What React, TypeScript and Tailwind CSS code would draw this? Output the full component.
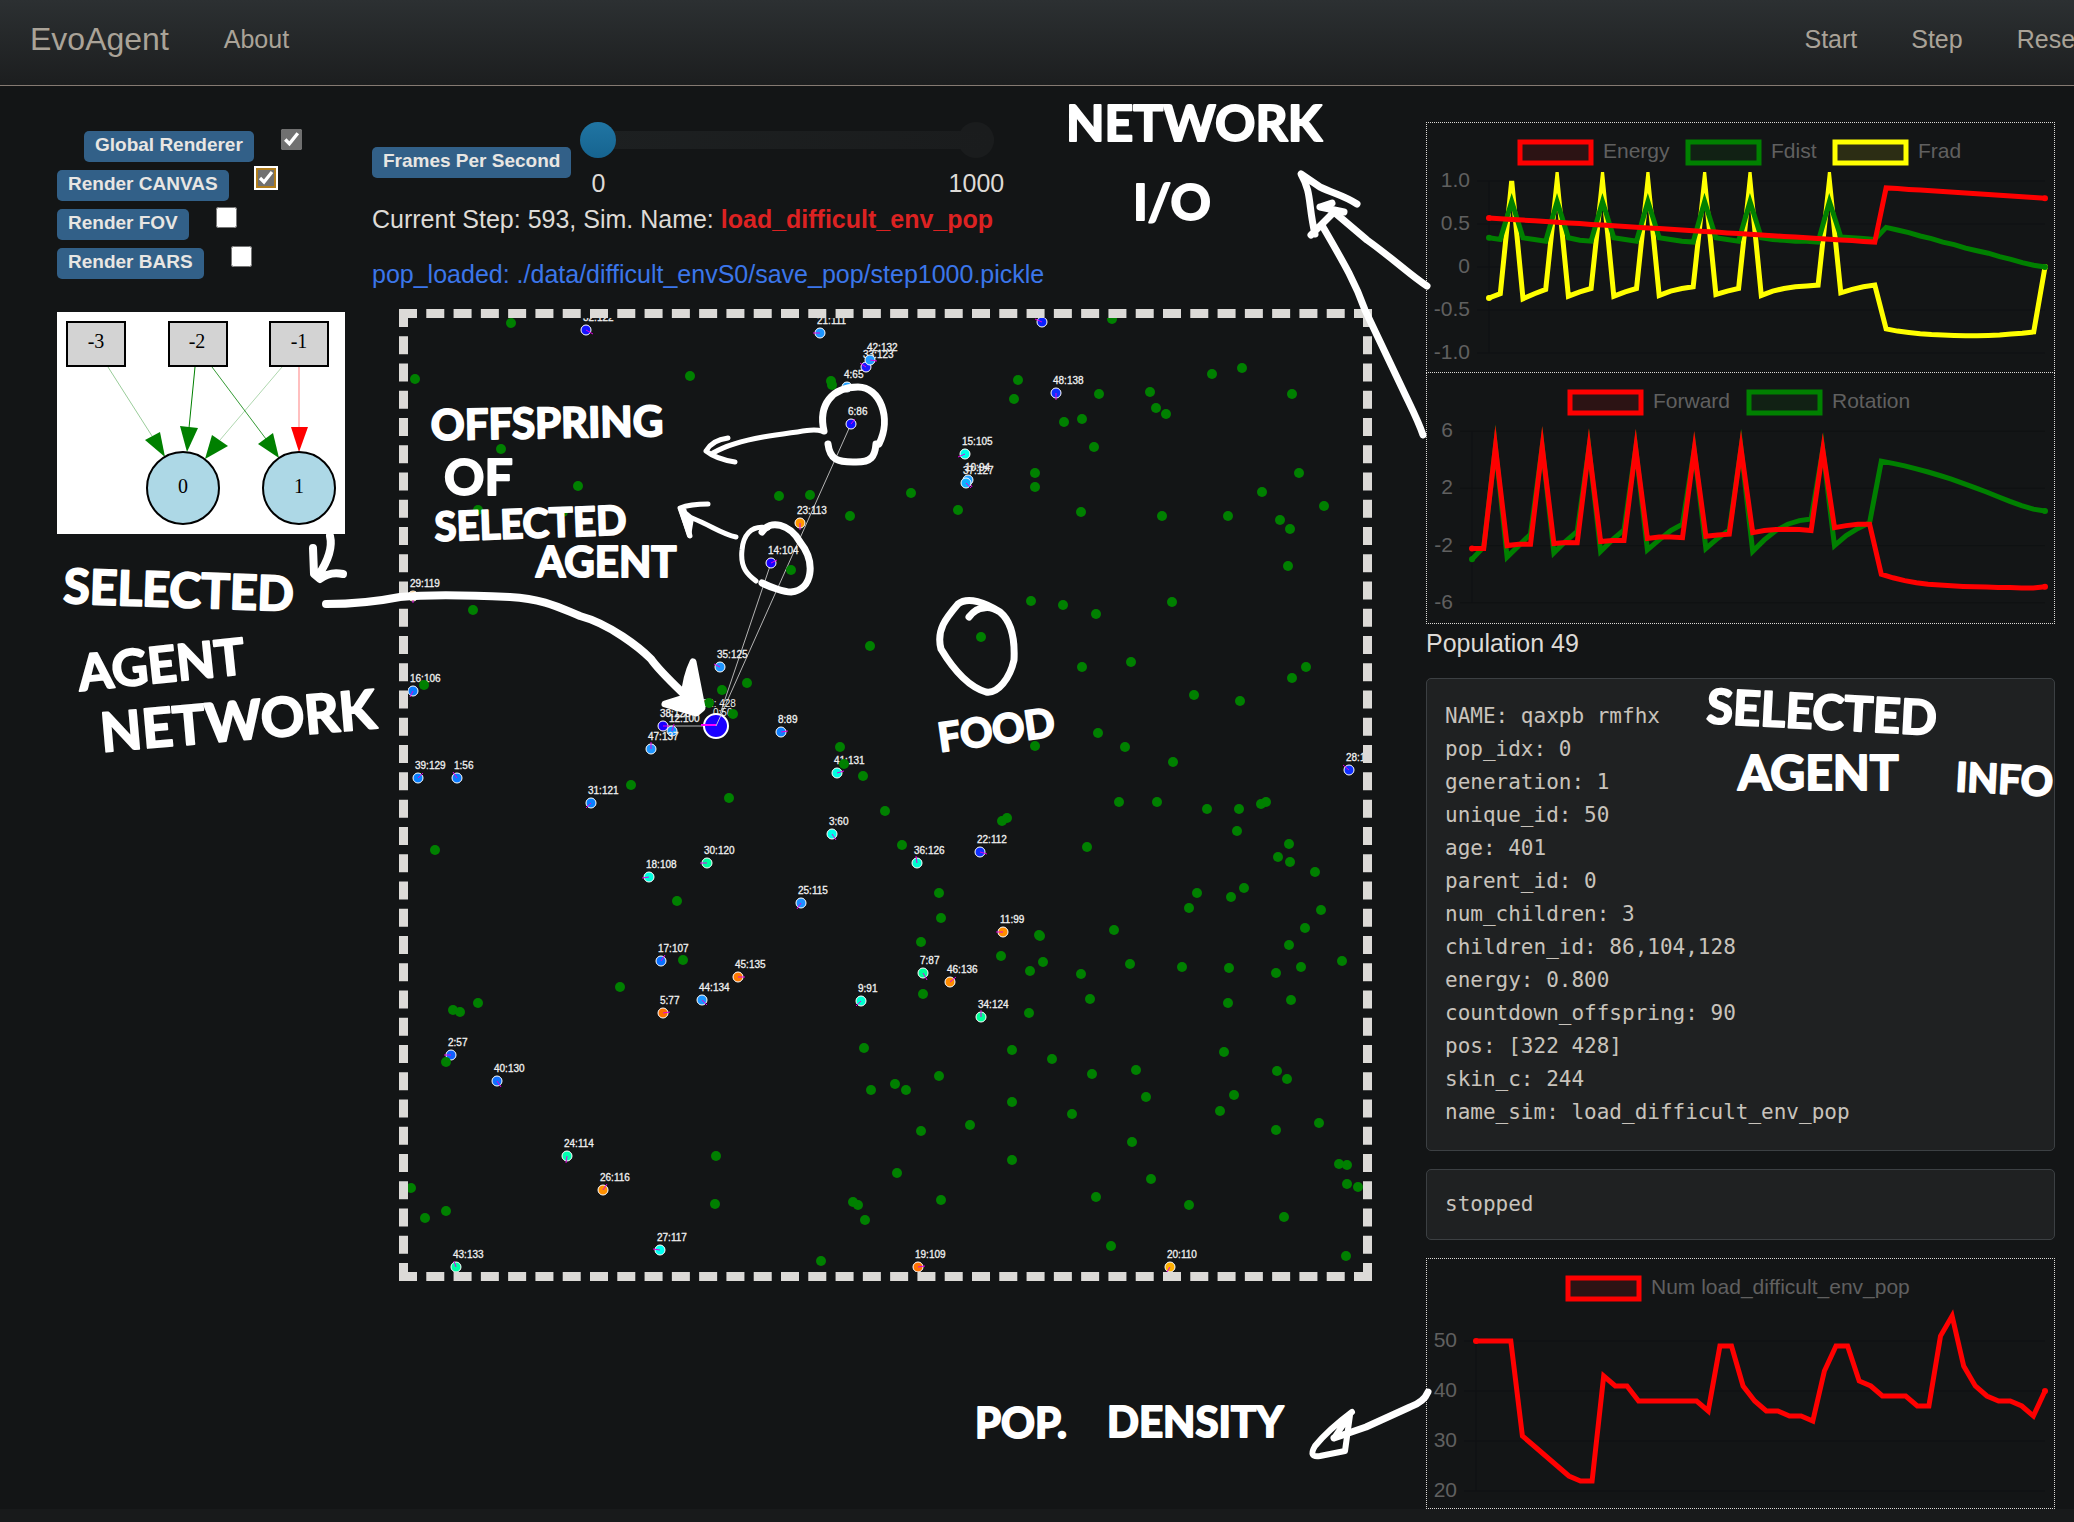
import React from "react";

type Point = [number, number];

const FOOD: Point[] = [
  [511, 323], [415, 379], [690, 376], [831, 381], [832, 385], [501, 449], [578, 486], [478, 510], [563, 512],
  [779, 496], [810, 495], [850, 516], [791, 570], [473, 610], [870, 646], [747, 683], [722, 690], [709, 703],
  [733, 714], [424, 685], [840, 747], [844, 764], [863, 776], [631, 785],
  [1112, 319], [1018, 380], [1014, 399], [1099, 394], [1064, 422], [1082, 419], [1150, 392], [1156, 408],
  [1166, 414], [1212, 374], [1242, 368], [1292, 394], [1094, 447], [1035, 473], [1035, 487], [911, 493],
  [958, 510], [1081, 512], [1162, 516], [1228, 516], [1262, 492], [1299, 473], [1324, 506], [1280, 520],
  [1290, 529], [1288, 566], [1031, 601], [1063, 605], [1096, 614], [1172, 602], [981, 637], [1082, 667],
  [1131, 662], [1306, 667], [1292, 678], [1194, 695], [1240, 701], [1098, 733], [1125, 747], [1035, 746],
  [1173, 762],
  [729, 798], [885, 811], [435, 850], [677, 901], [683, 960], [620, 987], [478, 1003], [453, 1010], [460, 1012],
  [446, 1062], [864, 1048], [871, 1090], [895, 1084], [716, 1156], [411, 1188], [425, 1218], [446, 1211],
  [715, 1204], [853, 1202], [858, 1205], [865, 1220], [821, 1261],
  [902, 845], [1002, 821], [1007, 818], [1119, 802], [1157, 802], [1207, 809], [1239, 809], [1261, 804],
  [1266, 802], [1237, 831], [1289, 844], [1278, 857], [1290, 862], [1315, 872], [1087, 847], [939, 893],
  [941, 918], [921, 942], [923, 994], [1197, 893], [1189, 908], [1231, 897], [1244, 888], [1321, 910],
  [1305, 928], [1289, 945], [1114, 930], [1039, 935], [1040, 936], [1001, 956], [1030, 971], [1043, 962],
  [1081, 974], [1130, 964], [1182, 967], [1229, 968], [1276, 973], [1301, 967], [1342, 961], [1090, 999],
  [1029, 1013], [1228, 1003], [1291, 1000], [1012, 1050], [1052, 1059], [939, 1076], [1092, 1074], [1136, 1070],
  [1224, 1052], [1277, 1071], [1287, 1079], [906, 1090], [1012, 1102], [1146, 1097], [1234, 1095], [1220, 1111],
  [1072, 1114], [970, 1125], [921, 1131], [1276, 1130], [1319, 1123], [1132, 1142], [1012, 1160], [897, 1173],
  [1151, 1179], [1096, 1197], [941, 1200], [1189, 1205], [1284, 1217], [1339, 1164], [1347, 1165], [1347, 1184],
  [1358, 1187], [1111, 1246], [1346, 1256],
];

type Agent = [label: string, x: number, y: number, color: string, dx: number, dy: number];

const AGENTS: Agent[] = [
  ["32:122", 586, 330, "#1414ff", 7, 4],
  ["21:111", 820, 333, "#1e96ff", -7, 0],
  ["33:123", 866, 367, "#1a1aff", -6, -4],
  ["42:132", 870, 360, "#1e9bff", 7, 1],
  ["4:65", 847, 387, "#20a0ff", 0, 0],
  ["6:86", 851, 424, "#1010ff", 4, -5],
  ["23:113", 800, 523, "#ff9500", 0, 7],
  ["14:104", 771, 563, "#1a00ff", 6, -3],
  ["29:119", 413, 596, "#ff9500", 0, 7],
  ["35:125", 720, 667, "#1e96ff", -6, -3],
  ["16:106", 413, 691, "#0a7aff", -3, 6],
  ["38:128", 663, 726, "#1a00ff", 7, 0],
  ["12:100", 672, 731, "#1090ff", 2, -7],
  ["47:137", 651, 749, "#1e96ff", 0, -7],
  ["8:89", 781, 732, "#1080ff", 7, -1],
  ["39:129", 418, 778, "#0a80ff", 5, -5],
  ["1:56", 457, 778, "#0a7aff", -4, -6],
  ["41:131", 837, 773, "#00ffe0", 7, -2],
  ["", 1042, 322, "#0a20ff", -7, -3],
  ["48:138", 1056, 393, "#1030ff", 0, 7],
  ["15:105", 965, 454, "#00ffe8", -7, 3],
  ["10:94", 968, 480, "#20a0ff", 4, 7],
  ["37:127", 966, 483, "#10b0ff", 5, 5],
  ["28:118", 1349, 770, "#1030ff", -6, -5],
  ["31:121", 591, 803, "#0a80ff", -5, 5],
  ["18:108", 649, 877, "#00ffe0", -7, 1],
  ["30:120", 707, 863, "#00ffa0", -7, 0],
  ["3:60", 832, 834, "#00ffe8", 4, 6],
  ["25:115", 801, 903, "#1e90ff", -4, 6],
  ["17:107", 661, 961, "#0a70ff", 4, -6],
  ["45:135", 738, 977, "#ff7800", 7, 0],
  ["44:134", 702, 1000, "#1e96ff", 5, 5],
  ["5:77", 663, 1013, "#ff7000", 7, -1],
  ["9:91", 861, 1001, "#00ffd0", -5, 5],
  ["2:57", 451, 1055, "#1060ff", -7, 0],
  ["40:130", 497, 1081, "#1070ff", 4, 6],
  ["24:114", 567, 1156, "#00ffb0", -1, 7],
  ["26:116", 603, 1190, "#ff9000", 4, -6],
  ["27:117", 660, 1250, "#00fff0", -7, -1],
  ["43:133", 456, 1267, "#00ffa8", -2, -6],
  ["36:126", 917, 863, "#00ffd0", -1, -7],
  ["22:112", 980, 852, "#1030ff", 7, 2],
  ["11:99", 1003, 932, "#ff8c00", -7, 0],
  ["7:87", 923, 973, "#00ff98", 4, 7],
  ["46:136", 950, 982, "#ff8c00", 6, -5],
  ["34:124", 981, 1017, "#00ff98", 0, -7],
  ["19:109", 918, 1267, "#ff7000", 7, -1],
  ["20:110", 1170, 1267, "#ffb000", -3, 5],
];

function World() {
  return (
    <div className="mt-5 mr-[54px] ml-[27px] border-[9px] border-dashed border-[#dcdad7]">
      <svg viewBox="408 318 955 954" className="block h-auto w-full" fontFamily="Liberation Sans, Arial, sans-serif">
        <g stroke="#b4b4b4" strokeWidth="1">
          <line x1="716" y1="726" x2="851" y2="424" />
          <line x1="716" y1="726" x2="771" y2="563" />
          <line x1="716" y1="726" x2="663" y2="726" />
        </g>
        {AGENTS.map(([label, x, y, color, dx, dy], i) => (
          <g key={i}>
            <circle cx={x} cy={y} r="5" fill={color} stroke="#fff" strokeWidth="1" />
            <line x1={x} y1={y} x2={x + dx} y2={y + dy} stroke="#e000e0" strokeWidth="1" />
            {label && (
              <text x={x - 3} y={y - 9} fontSize="10" fill="#f0f0f0" stroke="#f0f0f0" strokeWidth="0.3">
                {label}
              </text>
            )}
          </g>
        ))}
        <g fontSize="10" fill="#f0f0f0">
          <text x="697" y="707">322: 428</text>
          <text x="713" y="716">0:50</text>
        </g>
        <circle cx="716" cy="726" r="12" fill="#1a00ff" stroke="#fff" strokeWidth="2" />
        <line x1="701" y1="725" x2="716" y2="725" stroke="#ff00ff" strokeWidth="2" />
        <path d="M716 726l6-13" stroke="#c4c4d8" />
        {FOOD.map(([x, y], i) => (
          <circle key={i} cx={x} cy={y} r="5" fill="#008000" />
        ))}
      </svg>
    </div>
  );
}

type Series = { name: string; color: string; fill: string; box: number; data: number[] };
type Tick = [text: string, value: number];

function Chart({
  id,
  series,
  ticks,
  x0,
  zero,
  unit,
  height,
}: {
  id: string;
  series: Series[];
  ticks: Tick[];
  x0: number;
  zero: number;
  unit: number;
  height: number;
}) {
  const step = (619 - x0) / 49;
  const y = (v: number) => zero - v * unit;
  return (
    <svg viewBox={`1 1 627 ${height}`} className="block h-auto w-full" fontFamily="Liberation Sans, Arial, sans-serif" fontSize="21">
      <clipPath id={id}>
        <rect x="0" y="50" width="629" height="200" />
      </clipPath>
      <g stroke="#0f1112" strokeWidth="1">
        <line x1={x0} x2={x0} y1={y(ticks[0][1])} y2={y(ticks[ticks.length - 1][1])} />
        {ticks.map(([t, v]) => (
          <line key={t} x1={x0 - 12} x2="619" y1={y(v)} y2={y(v)} />
        ))}
      </g>
      {ticks.map(([t, v]) => (
        <text key={t} x={x0 - 19} y={y(v) + 6} textAnchor="end" fill="#606060">
          {t}
        </text>
      ))}
      <g clipPath={`url(#${id})`}>
        {[...series].reverse().map((s) => (
          <g key={s.name}>
            <polyline
              points={s.data.map((v, i) => `${(x0 + i * step).toFixed(1)},${y(v).toFixed(1)}`).join(" ")}
              fill="none"
              stroke={s.color}
              strokeWidth="5"
              strokeMiterlimit="10"
            />
            <circle cx={x0} cy={y(s.data[0])} r="3" fill={s.color} />
            <circle cx="619" cy={y(s.data[49])} r="3" fill={s.color} />
          </g>
        ))}
      </g>
      {series.map((s) => (
        <g key={s.name}>
          <rect x={s.box + 3} y="20" width="71" height="21" fill={s.fill} stroke={s.color} strokeWidth="5" />
          <text x={s.box + 86} y="36" fill="#606060">
            {s.name}
          </text>
        </g>
      ))}
    </svg>
  );
}

const energy = [
  ...Array.from({ length: 35 }, (_, i) => 0.57 - (0.28 * i) / 34),
  ...Array.from({ length: 15 }, (_, i) => 0.92 - (0.12 * i) / 14),
];

const fdist = [
  0.34, 0.32, 0.76, 0.34, 0.32, 0.3, 0.76, 0.34, 0.31, 0.3, 0.76, 0.34, 0.32, 0.3, 0.76, 0.34, 0.32, 0.3, 0.29, 0.76,
  0.34, 0.32, 0.3, 0.76, 0.34, 0.32, 0.31, 0.3, 0.3, 0.29, 0.76, 0.35, 0.34, 0.33, 0.32, 0.46, 0.43, 0.4, 0.36, 0.33,
  0.29, 0.26, 0.22, 0.19, 0.16, 0.12, 0.09, 0.05, 0.02, 0,
];

const frad = [
  -0.36, -0.31, 1, -0.37, -0.31, -0.26, 1, -0.34, -0.29, -0.25, 1, -0.34, -0.29, -0.25, 1, -0.33, -0.28, -0.25, -0.23, 1,
  -0.32, -0.28, -0.25, 1, -0.33, -0.28, -0.25, -0.23, -0.22, -0.21, 1, -0.3, -0.26, -0.23, -0.21, -0.72, -0.745, -0.76,
  -0.775, -0.785, -0.79, -0.795, -0.8, -0.8, -0.795, -0.79, -0.78, -0.77, -0.755, 0,
];

const forward = [
  -2.2, -2.2, 4.9, -2, -1.9, -1.9, 4.9, -1.85, -1.78, -1.8, 4.8, -1.72, -1.65, -1.65, 4.8, -1.5, -1.4, -1.4, -1.45, 4.7,
  -1.35, -1.25, -1.2, 4.8, -1.1, -0.95, -0.88, -0.86, -0.88, -0.95, 4.7, -0.75, -0.6, -0.5, -0.5, -4, -4.25, -4.45, -4.6,
  -4.7, -4.76, -4.81, -4.85, -4.88, -4.9, -4.92, -4.94, -4.96, -4.97, -4.88,
];

const rotation = [
  -2.95, -2.1, 4.9, -2.8, -2, -1.2, 4.9, -2.5, -1.7, -1, 4.8, -2.4, -1.6, -0.9, 4.8, -2.3, -1.6, -0.95, -0.5, 4.7, -2.2,
  -1.5, -0.9, 4.8, -2.4, -1.6, -0.95, -0.5, -0.25, -0.15, 4.7, -2, -1.3, -0.8, -0.4, 3.9, 3.75, 3.57, 3.37, 3.15, 2.9,
  2.65, 2.35, 2.05, 1.75, 1.42, 1.1, 0.8, 0.55, 0.42,
];

const population = [
  50, 50, 50, 50, 31, 29, 27, 25, 23, 22, 22, 43, 41, 41, 38, 38, 38, 38, 38, 38, 36, 49, 49, 41, 38, 36, 36, 35, 35, 34,
  44, 49, 49, 42, 41, 39, 39, 39, 37, 37, 51, 55, 45, 41, 39, 38, 38, 37, 35, 40,
];

const RED = "#ff0000";
const GREEN = "#008000";
const YELLOW = "#ffff00";
const RED_FILL = "#2c1314";
const GREEN_FILL = "#112114";
const YELLOW_FILL = "#2c2d14";

function NetworkGraph() {
  return (
    <svg
      viewBox="0 0 288 222"
      className="mt-[33px] block h-auto w-[288px] bg-white"
      fontFamily="Liberation Serif, Times New Roman, serif"
      fontSize="20"
      textAnchor="middle"
    >
      <g fill="#d3d3d3" stroke="#000" strokeWidth="2">
        <rect x="10" y="10" width="58" height="44" />
        <rect x="112" y="10" width="58" height="44" />
        <rect x="213" y="10" width="58" height="44" />
      </g>
      <g stroke="#008000">
        <line x1="51" y1="55" x2="95" y2="124" strokeOpacity="0.5" strokeWidth="0.8" />
        <line x1="138" y1="55" x2="132" y2="116" />
        <line x1="155" y1="55" x2="209" y2="127" strokeWidth="0.8" />
        <line x1="225" y1="55" x2="163" y2="128" strokeOpacity="0.4" strokeWidth="0.8" />
      </g>
      <line x1="242" y1="55" x2="242" y2="116" stroke="#ff0000" strokeOpacity="0.5" />
      <g fill="#008000">
        <path d="M88 128L103 120L108 145Z" />
        <path d="M123 114L141 116L130 140Z" />
        <path d="M201 132L216 121L222 146Z" />
        <path d="M155 123L171 134L148 147Z" />
      </g>
      <path d="M234 115H251L242 140Z" fill="#ff0000" />
      <g fill="#add8e6" stroke="#000" strokeWidth="2">
        <circle cx="126" cy="176" r="36" />
        <circle cx="242" cy="176" r="36" />
      </g>
      <text x="39" y="36">-3</text>
      <text x="140" y="36">-2</text>
      <text x="242" y="36">-1</text>
      <text x="126" y="181">0</text>
      <text x="242" y="181">1</text>
    </svg>
  );
}

const BADGE = "block h-[31px] rounded-[5px] bg-[#326088] px-[11px] text-[19px] leading-[28px] font-bold text-[#e8e6e3]";

function Toggle({ id, label, checked, focused, indent }: { id: string; label: string; checked?: boolean; focused?: boolean; indent?: boolean }) {
  return (
    <div className={indent ? "flex items-start gap-[27px] pl-[27px]" : "flex items-start gap-[27px]"}>
      <label htmlFor={id} className={`mt-0.5 ${BADGE}`}>
        {label}
      </label>
      <input
        id={id}
        type="checkbox"
        defaultChecked={checked}
        className={
          focused
            ? "size-5 rounded-[4px] accent-[#707070] ring-2 ring-white outline-2 -outline-offset-2 outline-[#b07d1c]"
            : "size-[21px] accent-[#707070]"
        }
      />
    </div>
  );
}

const INFO = [
  "NAME: qaxpb rmfhx",
  "pop_idx: 0",
  "generation: 1",
  "unique_id: 50",
  "age: 401",
  "parent_id: 0",
  "num_children: 3",
  "children_id: 86,104,128",
  "energy: 0.800",
  "countdown_offspring: 90",
  "pos: [322 428]",
  "skin_c: 244",
  "name_sim: load_difficult_env_pop",
].join("\n");

type Note = [text: string, x: number, y: number, size: number, angle: number];

const NOTES: Note[] = [
  ["SELECTED", 63, 603, 48, 2],
  ["AGENT", 80, 691, 50, -6],
  ["NETWORK", 102, 752, 54, -5],
  ["OFFSPRING", 431, 440, 42, -1],
  ["OF", 444, 495, 50, 0],
  ["SELECTED", 435, 541, 40, -2],
  ["AGENT", 536, 577, 42, 0],
  ["NETWORK", 1066, 141, 50, 0],
  ["I/O", 1133, 220, 50, 0],
  ["FOOD", 940, 752, 40, -8],
  ["SELECTED", 1706, 723, 48, 3],
  ["AGENT", 1738, 790, 48, 0],
  ["INFO", 1955, 791, 40, 3],
  ["POP.", 975, 1438, 42, 0],
  ["DENSITY", 1107, 1437, 42, 0],
];

function Annotations() {
  return (
    <svg
      viewBox="0 0 2074 1522"
      className="pointer-events-none absolute top-0 left-0 h-auto w-full"
      fontFamily="Lato, sans-serif"
      fontWeight="700"
    >
      {NOTES.map(([text, x, y, size, angle]) => (
        <text
          key={`${text}${x}`}
          x={x}
          y={y}
          fontSize={size}
          fill="#fff"
          stroke="#fff"
          strokeWidth="2"
          strokeLinejoin="round"
          transform={`rotate(${angle} ${x} ${y})`}
        >
          {text}
        </text>
      ))}
      <g fill="none" stroke="#fff" strokeWidth="7" strokeLinecap="round" strokeLinejoin="round">
        <path d="M330 536Q334 552 318 576M313 548L314 574L320 579Q330 571 343 574" strokeWidth="8" />
        <path d="M326 604C350 604 375 602 400 597C430 594 470 595 510 597C545 599 560 608 580 616C610 624 640 648 651 659C660 672 680 690 690 700" strokeWidth="8" />
        <path d="M665 704L684 698Q686 676 693 662L702 708L696 713Z" fill="#fff" />
        <path d="M824 431C818 405 832 387 858 387C880 387 892 418 879 444" />
        <path d="M828 444C830 460 838 462 853 462C872 463 875 456 876 444" />
        <path d="M822 431C812 428 800 432 763 437C740 441 725 446 713 453M728 438Q712 440 706 451Q716 459 735 462" strokeWidth="5" />
        <path d="M736 537C722 534 712 526 692 518M708 504Q690 504 680 508L690 536L684 510" strokeWidth="5" />
        <path d="M680 508L689 536L692 518Z" fill="#fff" strokeWidth="4" />
        <path d="M762 532C770 519 790 524 800 542C816 562 813 590 791 592C784 592 770 587 762 583" />
        <path d="M768 528C750 524 743 537 742 550C740 568 748 575 756 581" strokeWidth="5" />
        <path d="M969 617Q976 608 984 608M1000 612C1012 622 1015 640 1014 660C1010 678 998 694 986 692C966 686 950 664 941 649C936 630 946 618 958 604C968 596 986 603 1000 612Q990 606 984 608" strokeWidth="7" />
        <path d="M1427 286C1410 275 1395 260 1367 240L1334 212" />
        <path d="M1357 204C1345 196 1335 194 1320 187L1301 174C1312 193 1308 205 1315 234M1320 207L1344 212L1335 211L1311 235M1320 207L1332 203" />
        <path d="M1423 435C1418 420 1410 405 1403 390L1365 310C1355 282 1345 265 1323 227" />
        <path d="M1428 1392Q1424 1402 1410 1407L1366 1427L1334 1438" />
        <path d="M1352 1412Q1328 1430 1315 1446Q1308 1458 1320 1456L1345 1451L1350 1415L1334 1438" strokeWidth="6" />
      </g>
    </svg>
  );
}

const PRE = "rounded-[5px] border border-[#3c4043] bg-[#1f2122] px-[18px] font-['DejaVu_Sans_Mono',monospace] text-[21px] leading-[33px] text-[#c8c3bc]";

export default function App() {
  return (
    <div className="relative min-h-screen overflow-x-hidden bg-[#181a1b] font-['Liberation_Sans',Arial,sans-serif] text-[25px] leading-[30px] text-[#dedbd7]">
      <nav className="flex h-[86px] items-center gap-[55px] overflow-hidden border-b border-[#857a72] bg-linear-to-b from-[#2c3032] to-[#1c1e1f] pb-2 pl-[30px] text-[#aaa398]">
        <a href="#home" className="text-[32px] leading-10">
          EvoAgent
        </a>
        <a href="#about">About</a>
        <div className="-mr-2 ml-auto flex flex-none gap-[54px]">
          <a href="#start">Start</a>
          <a href="#step">Step</a>
          <a href="#reset">Reset</a>
        </div>
      </nav>

      <main className="grid grid-cols-[315fr_1054fr_629fr] bg-[#131516] pr-[19px] pl-[57px]">
        <section className="pt-[43px]">
          <div className="flex flex-col gap-[6px]">
            <Toggle id="global" label="Global Renderer" checked indent />
            <Toggle id="canvas" label="Render CANVAS" checked focused />
            <Toggle id="fov" label="Render FOV" />
            <Toggle id="bars" label="Render BARS" />
          </div>
          <NetworkGraph />
        </section>

        <section className="min-w-0 pt-9">
          <div className="flex items-start gap-[9px]">
            <label htmlFor="fps" className={`mt-[25px] flex-none ${BADGE}`}>
              Frames Per Second
            </label>
            <div className="w-[414px]">
              <div className="relative h-9">
                <span className="absolute top-0 right-0 size-9 rounded-full bg-[#1a1c1d]" />
                <input
                  id="fps"
                  type="range"
                  min={0}
                  max={1000}
                  defaultValue={0}
                  className="relative block h-9 w-full appearance-none bg-transparent [&::-webkit-slider-runnable-track]:h-[18px] [&::-webkit-slider-runnable-track]:rounded-full [&::-webkit-slider-runnable-track]:bg-linear-to-r [&::-webkit-slider-runnable-track]:from-[#1d2021] [&::-webkit-slider-runnable-track]:to-[#1a1c1d] [&::-webkit-slider-thumb]:mt-[-9px] [&::-webkit-slider-thumb]:size-9 [&::-webkit-slider-thumb]:appearance-none [&::-webkit-slider-thumb]:rounded-full [&::-webkit-slider-thumb]:bg-linear-to-b [&::-webkit-slider-thumb]:from-[#2075a3] [&::-webkit-slider-thumb]:to-[#166490]"
                />
              </div>
              <div className="mt-[10px] flex justify-between">
                <span className="w-9 text-center">0</span>
                <span className="-mr-[10px] w-14 text-center">1000</span>
              </div>
            </div>
          </div>
          <p className="mt-[6px]">
            Current Step: 593, Sim. Name: <b className="text-[#dc2222]">load_difficult_env_pop</b>
          </p>
          <p className="mt-[25px] text-[#3b76ea]">pop_loaded: ./data/difficult_envS0/save_pop/step1000.pickle</p>
          <World />
        </section>

        <section className="min-w-0 pt-9">
          <div className="border border-dotted border-[#dcdad7]">
            <Chart
              id="inputs"
              x0={63}
              zero={145}
              unit={86}
              height={249}
              ticks={[["1.0", 1], ["0.5", 0.5], ["0", 0], ["-0.5", -0.5], ["-1.0", -1]]}
              series={[
                { name: "Energy", color: RED, fill: RED_FILL, box: 91, data: energy },
                { name: "Fdist", color: GREEN, fill: GREEN_FILL, box: 259, data: fdist },
                { name: "Frad", color: YELLOW, fill: YELLOW_FILL, box: 406, data: frad },
              ]}
            />
          </div>
          <div className="-mt-px border border-dotted border-[#dcdad7]">
            <Chart
              id="outputs"
              x0={46}
              zero={145}
              unit={14.3}
              height={250}
              ticks={[["6", 6], ["2", 2], ["-2", -2], ["-6", -6]]}
              series={[
                { name: "Forward", color: RED, fill: RED_FILL, box: 141, data: forward },
                { name: "Rotation", color: GREEN, fill: GREEN_FILL, box: 320, data: rotation },
              ]}
            />
          </div>
          <p className="mt-1">Population 49</p>
          <pre className={`mt-5 py-[21px] ${PRE}`}>{INFO}</pre>
          <pre className={`mt-[18px] py-[18px] ${PRE}`}>stopped</pre>
          <div className="mt-[18px] border border-dotted border-[#dcdad7]">
            <Chart
              id="population"
              x0={50}
              zero={333}
              unit={5}
              height={249}
              ticks={[["50", 50], ["40", 40], ["30", 30], ["20", 20]]}
              series={[{ name: "Num load_difficult_env_pop", color: RED, fill: RED_FILL, box: 139, data: population }]}
            />
          </div>
        </section>
      </main>
      <Annotations />
    </div>
  );
}
